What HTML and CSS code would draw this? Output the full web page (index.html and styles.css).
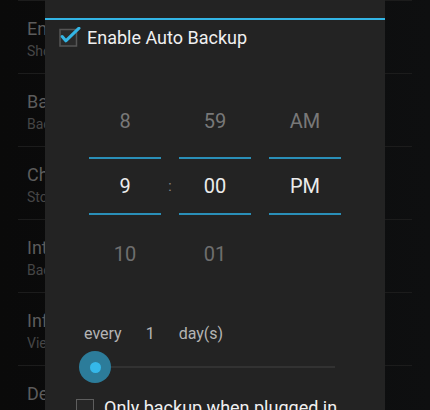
FILE: index.html
```html
<!DOCTYPE html>
<html>
<head>
<meta charset="utf-8">
<link rel="stylesheet" href="styles.css">
</head>
<body>
<div class="screen">
  <ul class="pref-list">
    <li class="pref"><div class="pref-text"><div class="pref-title">Enable</div><div class="pref-sub">Show</div></div></li>
    <li class="pref"><div class="pref-text"><div class="pref-title">Backup</div><div class="pref-sub">Backup</div></div></li>
    <li class="pref"><div class="pref-text"><div class="pref-title">Choose</div><div class="pref-sub">Storage</div></div></li>
    <li class="pref"><div class="pref-text"><div class="pref-title">Internal</div><div class="pref-sub">Backups</div></div></li>
    <li class="pref"><div class="pref-text"><div class="pref-title">Info</div><div class="pref-sub">View</div></div></li>
    <li class="pref"><div class="pref-text"><div class="pref-title">Delete</div><div class="pref-sub">Remove</div></div></li>
  </ul>

  <div class="dialog">
    <div class="dlg-head"></div>

    <label class="check-row">
      <svg class="cb" width="22" height="20" viewBox="0 0 22 20">
        <rect x="1" y="2.5" width="16.5" height="16.5" fill="#2a2a2a" stroke="#555" stroke-width="1.5"/>
        <path d="M3.2 9.5 L6.8 13.8 L20 1.2" fill="none" stroke="#33b5e5" stroke-width="3" stroke-linecap="round" stroke-linejoin="round"/>
      </svg>
      <span class="check-label">Enable Auto Backup</span>
    </label>

    <div class="picker">
      <div class="col">
        <div class="val val-top">8</div>
        <div class="sel">9</div>
        <div class="val val-bot">10</div>
      </div>
      <div class="sep">:</div>
      <div class="col">
        <div class="val val-top">59</div>
        <div class="sel">00</div>
        <div class="val val-bot">01</div>
      </div>
      <div class="sep"></div>
      <div class="col">
        <div class="val val-top">AM</div>
        <div class="sel">PM</div>
        <div class="val val-bot"></div>
      </div>
    </div>

    <div class="interval">
      <span>every</span>
      <span>1</span>
      <span>day(s)</span>
    </div>

    <div class="slider">
      <div class="track"></div>
      <div class="thumb"><div class="thumb-core"></div></div>
    </div>

    <label class="check-row check-row-2">
      <span class="box"></span>
      <span class="check-label">Only backup when plugged in</span>
    </label>
  </div>
</div>
</body>
</html>
```

FILE: styles.css
```css
html, body {
  margin: 0;
  padding: 0;
  width: 430px;
  height: 410px;
  overflow: hidden;
  background: #0b0b0c;
  font-family: Roboto, "Noto Sans", "DejaVu Sans", sans-serif;
}

.screen {
  position: relative;
  width: 430px;
  height: 410px;
  overflow: hidden;
  background: linear-gradient(90deg, #0a0a0a 0%, #0c0c0d 60%, #0e0f10 100%);
}

.pref-list {
  list-style: none;
  margin: 0 18px;
  padding: 0;
  border-top: 1px solid #1c1c1c;
}

.pref {
  box-sizing: border-box;
  height: 73px;
  border-bottom: 1px solid #1c1c1c;
  padding-left: 9px;
}

.pref-text {
  width: 18px;
  overflow: hidden;
  white-space: nowrap;
}

.pref-title {
  padding-top: 16px;
  font-size: 18px;
  line-height: 24px;
  color: #5c5c5c;
}

.pref-sub {
  font-size: 14px;
  line-height: 20px;
  color: #464646;
}

.dialog {
  position: absolute;
  left: 45px;
  top: 0;
  width: 340px;
  height: 430px;
  background: #232323;
  display: flex;
  flex-direction: column;
}

.dlg-head {
  height: 18px;
  border-bottom: 2px solid #33b5e5;
  flex: none;
}

.check-row {
  display: flex;
  align-items: center;
  margin-top: 9px;
  padding-left: 14px;
  height: 18px;
  gap: 10px;
}

.cb {
  margin-top: -2px;
  margin-right: -4px;
  flex: none;
}

.check-label {
  font-size: 18px;
  line-height: 18px;
  color: #f0f0f0;
  white-space: nowrap;
}

.picker {
  margin-top: 38px;
  margin-left: 44px;
  display: grid;
  grid-template-columns: 72px 18px 72px 18px 72px;
}

.col {
  display: flex;
  flex-direction: column;
  text-align: center;
  font-size: 20px;
}

.val {
  color: #787878;
}

.val-top {
  height: 72px;
  line-height: 72px;
}

.val-bot {
  height: 78px;
  line-height: 78px;
  color: #6e6e6e;
}

.sel {
  height: 54px;
  line-height: 54px;
  color: #ececec;
  border-top: 2px solid #2a8fb8;
  border-bottom: 2px solid #2a8fb8;
}

.sep {
  padding-top: 74px;
  height: 54px;
  line-height: 54px;
  text-align: center;
  font-size: 14px;
  color: #8a8a8a;
}

.interval {
  margin-top: 31px;
  padding-left: 39px;
  display: flex;
  gap: 24px;
  font-size: 16px;
  line-height: 20px;
  color: #b4b4b4;
}

.slider {
  position: relative;
  margin-top: 7px;
  margin-left: 34px;
  width: 256px;
  height: 32px;
}

.track {
  position: absolute;
  left: 0;
  right: 0;
  top: 15px;
  height: 2px;
  background: #323232;
}

.thumb {
  position: absolute;
  left: 0;
  top: 0;
  width: 32px;
  height: 32px;
  border-radius: 50%;
  background: #2c7c9a;
  display: flex;
  align-items: center;
  justify-content: center;
}

.thumb-core {
  width: 11px;
  height: 11px;
  border-radius: 50%;
  background: #35b8ea;
}

.check-row-2 {
  margin-top: 16px;
  padding-left: 31px;
  align-items: flex-start;
}

.box {
  width: 18px;
  height: 18px;
  box-sizing: border-box;
  border: 1.5px solid #5e5e5e;
  background: #262626;
  flex: none;
}

.check-row-2 .check-label {
  line-height: 22px;
  margin-top: -2px;
}
```
